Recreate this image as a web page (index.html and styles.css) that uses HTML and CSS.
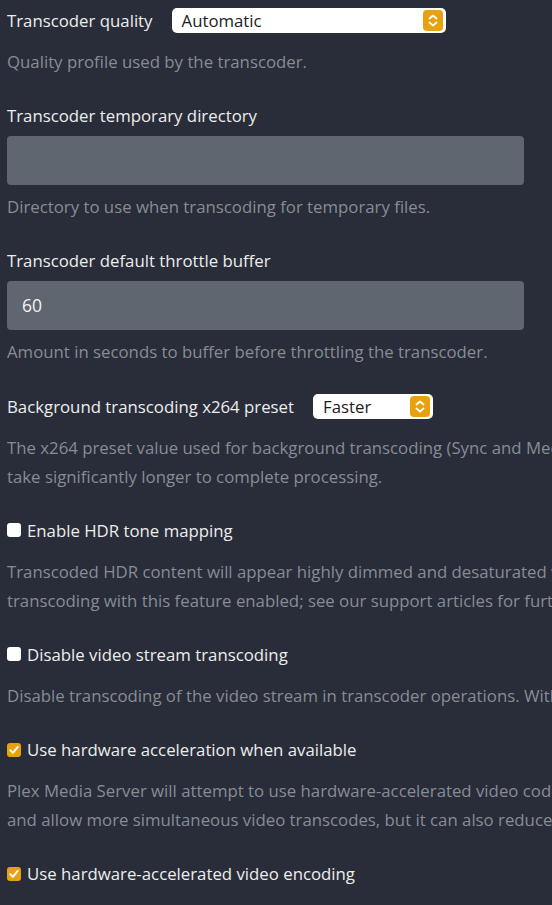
FILE: index.html
```html
<!DOCTYPE html>
<html lang="en">
<head>
<meta charset="utf-8">
<title>Transcoder settings</title>
<link rel="stylesheet" href="styles.css">
</head>
<body>
<div class="page">

  <div class="setting">
    <div class="label-row">
      <span class="label">Transcoder quality</span>
      <div class="select select-quality">
        <span class="select-value">Automatic</span>
        <span class="stepper"><svg viewBox="0 0 20 21" width="20" height="21"><path d="M6.5 8.5 L10 5.5 L13.5 8.5 M6.5 12.5 L10 15.5 L13.5 12.5" fill="none" stroke="#fff" stroke-width="1.8" stroke-linecap="round" stroke-linejoin="round"/></svg></span>
      </div>
    </div>
    <div class="desc"><span class="line">Quality profile used by the transcoder.</span></div>
  </div>

  <div class="setting">
    <div class="label-row"><span class="label">Transcoder temporary directory</span></div>
    <div class="input"></div>
    <div class="desc after-input"><span class="line">Directory to use when transcoding for temporary files.</span></div>
  </div>

  <div class="setting">
    <div class="label-row"><span class="label">Transcoder default throttle buffer</span></div>
    <div class="input">60</div>
    <div class="desc after-input"><span class="line">Amount in seconds to buffer before throttling the transcoder.</span></div>
  </div>

  <div class="setting">
    <div class="label-row">
      <span class="label">Background transcoding x264 preset</span>
      <div class="select select-preset">
        <span class="select-value">Faster</span>
        <span class="stepper"><svg viewBox="0 0 20 21" width="20" height="21"><path d="M6.5 8.5 L10 5.5 L13.5 8.5 M6.5 12.5 L10 15.5 L13.5 12.5" fill="none" stroke="#fff" stroke-width="1.8" stroke-linecap="round" stroke-linejoin="round"/></svg></span>
      </div>
    </div>
    <div class="desc">
      <span class="line">The x264 preset value used for background transcoding (Sync and Media Optimizer). Slower values will result in better video quality and smaller file sizes, but will</span>
      <span class="line">take significantly longer to complete processing.</span>
    </div>
  </div>

  <div class="setting">
    <div class="label-row">
      <span class="checkbox"></span>
      <span class="label">Enable HDR tone mapping</span>
    </div>
    <div class="desc">
      <span class="line">Transcoded HDR content will appear highly dimmed and desaturated without tone mapping. Some hardware may not support</span>
      <span class="line">transcoding with this feature enabled; see our support articles for further information.</span>
    </div>
  </div>

  <div class="setting">
    <div class="label-row">
      <span class="checkbox"></span>
      <span class="label">Disable video stream transcoding</span>
    </div>
    <div class="desc">
      <span class="line">Disable transcoding of the video stream in transcoder operations. With this option enabled, video that cannot be direct streamed will fail.</span>
    </div>
  </div>

  <div class="setting">
    <div class="label-row">
      <span class="checkbox checked"><svg viewBox="0 0 14 14" width="14" height="14"><path d="M3.3 7.2 L5.9 9.9 L10.8 3.9" fill="none" stroke="#fff" stroke-width="1.9" stroke-linecap="round" stroke-linejoin="round"/></svg></span>
      <span class="label">Use hardware acceleration when available</span>
    </div>
    <div class="desc">
      <span class="line">Plex Media Server will attempt to use hardware-accelerated video codecs when encoding and decoding video. Hardware acceleration can make transcoding faster</span>
      <span class="line">and allow more simultaneous video transcodes, but it can also reduce video quality and compatibility.</span>
    </div>
  </div>

  <div class="setting">
    <div class="label-row">
      <span class="checkbox checked"><svg viewBox="0 0 14 14" width="14" height="14"><path d="M3.3 7.2 L5.9 9.9 L10.8 3.9" fill="none" stroke="#fff" stroke-width="1.9" stroke-linecap="round" stroke-linejoin="round"/></svg></span>
      <span class="label">Use hardware-accelerated video encoding</span>
    </div>
  </div>

</div>
</body>
</html>
```

FILE: styles.css
```css
html, body {
  margin: 0;
  padding: 0;
  background: #282d39;
  overflow: hidden;
}

body {
  font-family: "Open Sans", "Noto Sans", sans-serif;
  font-size: 16.8px;
  color: #ececec;
  width: 552px;
  height: 905px;
}

.page {
  padding: 6px 0 0 7px;
}

.setting {
  margin-bottom: 25.2px;
}

.label-row {
  display: flex;
  align-items: center;
  height: 29px;
  line-height: 29px;
  white-space: nowrap;
}

.label {
  color: #ededed;
}

.desc {
  margin-top: 12px;
  line-height: 29px;
  color: #878c95;
}

.desc.after-input {
  margin-top: 7.5px;
}

.line {
  display: block;
  white-space: nowrap;
}

.input {
  margin-top: 5.5px;
  width: 517px;
  height: 49px;
  box-sizing: border-box;
  background: #5f6670;
  border-radius: 4px;
  padding-left: 15px;
  line-height: 49px;
  color: #f2f2f2;
  font-size: 17.5px;
}

.select {
  display: flex;
  align-items: center;
  justify-content: space-between;
  box-sizing: border-box;
  height: 25px;
  margin-left: 19px;
  background: #ffffff;
  border-radius: 5px;
  padding: 0 3px 0 10px;
  color: #1c1c1c;
  line-height: 25px;
}

.select-quality {
  width: 274px;
}

.select-preset {
  width: 120px;
}

.stepper {
  display: flex;
  width: 20px;
  height: 21px;
  border-radius: 4px;
  background: #e8a20f;
}

.checkbox {
  display: flex;
  align-items: center;
  justify-content: center;
  width: 14px;
  height: 14px;
  box-sizing: border-box;
  border-radius: 3px;
  background: #ffffff;
  margin-right: 6px;
  flex: none;
}

.checkbox.checked {
  background: #e8a20f;
}
```
